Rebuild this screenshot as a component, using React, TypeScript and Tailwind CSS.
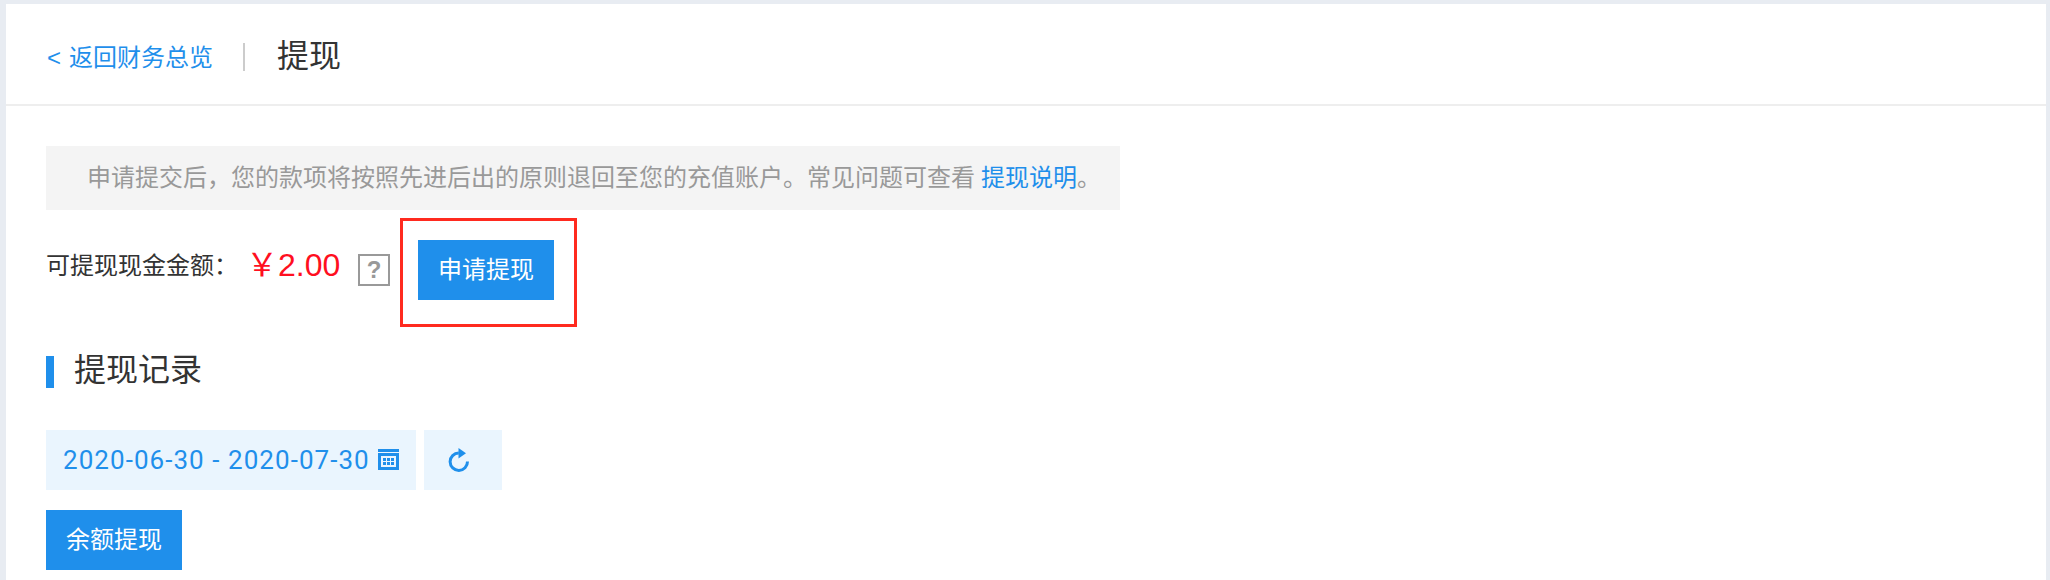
import React from 'react';

const cjk = "font-['Liberation_Sans','Noto_Sans_CJK_SC',sans-serif]";

function CalendarIcon() {
  return (
    <svg width="21" height="21" viewBox="0 0 21 21" className="-mt-0.5 shrink-0">
      <rect x="0" y="0" width="21" height="3" fill="#1f8feb" />
      <path d="M0 4h21v17H0z" fill="#1f8feb" />
      <rect x="3" y="7" width="15" height="11" fill="#eaf5fe" />
      <g fill="#1f8feb">
        <rect x="5" y="9" width="3" height="3" />
        <rect x="9" y="9" width="3" height="3" />
        <rect x="13" y="9" width="3" height="3" />
        <rect x="5" y="13" width="3" height="3" />
        <rect x="9" y="13" width="3" height="3" />
        <rect x="13" y="13" width="3" height="3" />
      </g>
    </svg>
  );
}

function RefreshIcon() {
  return (
    <svg width="22" height="24" viewBox="0 0 22 24">
      <path d="M19.5 13.5A8.7 8.7 0 1 1 10.8 5" fill="none" stroke="#1f8feb" strokeWidth="3" />
      <path d="M10.5 0l7.5 5.2-7.5 5.3z" fill="#1f8feb" />
    </svg>
  );
}

export default function App() {
  return (
    <div className={`h-[580px] overflow-hidden bg-[#e8ecf2] pt-1 pl-1.5 pr-1 ${cjk}`}>
      <div className="h-full bg-white">
        <div className="flex h-[102px] items-center border-b-2 border-[#eeeeee] pl-[41px]">
          <a className="pt-2 text-[24px] leading-none text-[#1f8feb]">
            <span className="mr-2">&lt;</span>返回财务总览
          </a>
          <span className="ml-[30px] mr-[32px] mt-1.5 h-7 w-0.5 bg-[#cccccc]" />
          <h1 className="pt-1 text-[32px] leading-none text-[#333333]">提现</h1>
        </div>

        <div className="pl-10 pt-10">
          <div className="flex h-16 w-[1074px] items-center bg-[#f4f4f4] pl-[41px] text-[24px] text-[#999999]">
            申请提交后，您的款项将按照先进后出的原则退回至您的充值账户。常见问题可查看
            <a className="ml-1.5 text-[#1f8feb]">提现说明</a>
            。
          </div>

          <div className="mt-[30px] flex h-[60px] items-start">
            <span className="mt-[10px] w-[200px] text-[24px] leading-[32px] text-[#333333]">可提现现金金额：</span>
            <span className="mt-[5px] w-[112px] text-[32px] leading-[40px] text-[#ff0f1f]">￥2.00</span>
            <span className="mt-[14px] flex h-8 w-8 items-center justify-center border-2 border-[#999999] text-[24px] font-bold leading-none text-[#999999]">
              ?
            </span>
            <div className="relative ml-7">
              <button className="h-[60px] w-[136px] bg-[#1f8feb] text-[24px] text-white">申请提现</button>
              <div className="absolute -left-[18px] -top-[22px] h-[109px] w-[177px] border-[3px] border-[#ff2a1f]" />
            </div>
          </div>

          <div className="mt-[56px] flex h-8 items-center">
            <span className="h-8 w-2 bg-[#1f8feb]" />
            <h2 className="-mt-1 ml-5 text-[32px] leading-none text-[#333333]">提现记录</h2>
          </div>

          <div className="mt-[42px] flex gap-2">
            <div className="flex h-[60px] w-[370px] items-center gap-2 bg-[#eaf5fe] pl-[17px] text-[26px] text-[#1f8feb]">
              <span className="font-['Roboto',sans-serif] tracking-[1.05px]">2020-06-30 - 2020-07-30</span>
              <CalendarIcon />
            </div>
            <div className="flex h-[60px] w-[78px] items-center justify-center bg-[#eaf5fe] pr-2">
              <RefreshIcon />
            </div>
          </div>

          <button className="mt-5 block h-[60px] w-[136px] bg-[#1f8feb] text-[24px] text-white">余额提现</button>
        </div>
      </div>
    </div>
  );
}
